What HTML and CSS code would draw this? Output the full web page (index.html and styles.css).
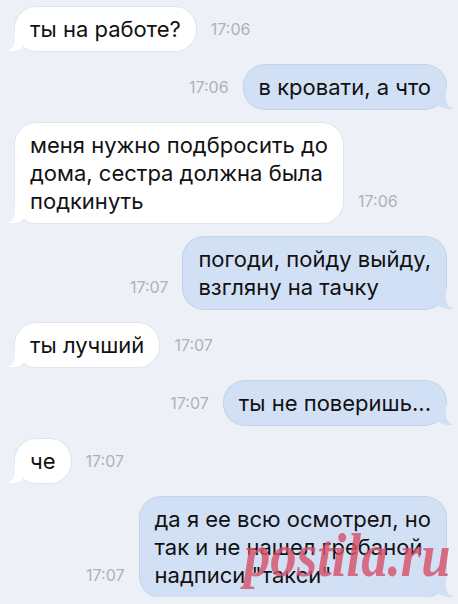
FILE: index.html
```html
<!DOCTYPE html>
<html lang="ru">
<head>
    <meta charset="UTF-8">
    <meta name="viewport" content="width=device-width, initial-scale=1.0">
    <title>Переписка</title>
    <link rel="stylesheet" href="styles.css">
</head>
<body>
    <div class="chat">
        <div class="row in">
            <div class="bubble">ты на работе?</div>
            <span class="time">17:06</span>
        </div>
        <div class="row out">
            <span class="time">17:06</span>
            <div class="bubble">в кровати, а что</div>
        </div>
        <div class="row in">
            <div class="bubble">меня нужно подбросить до<br>дома, сестра должна была<br>подкинуть</div>
            <span class="time">17:06</span>
        </div>
        <div class="row out">
            <span class="time">17:07</span>
            <div class="bubble">погоди, пойду выйду,<br>взгляну на тачку</div>
        </div>
        <div class="row in">
            <div class="bubble">ты лучший</div>
            <span class="time">17:07</span>
        </div>
        <div class="row out">
            <span class="time">17:07</span>
            <div class="bubble">ты не поверишь...</div>
        </div>
        <div class="row in">
            <div class="bubble">че</div>
            <span class="time">17:07</span>
        </div>
        <div class="row out">
            <span class="time">17:07</span>
            <div class="bubble">да я ее всю осмотрел, но<br>так и не нашел гребаной<br>надписи "такси"</div>
        </div>
    </div>

    <!-- watermark -->
    <div class="watermark">postila.ru</div>
</body>
</html>
```

FILE: styles.css
```css
/* Page */
body {
    margin: 0;
    background-color: #edf1f7;
    font-family: Inter, "Noto Sans", sans-serif;
    color: #111;
    overflow: hidden;
}

/* Message list */
.chat {
    display: flex;
    flex-direction: column;
    gap: 14px;
    padding: 7px 12px 0 15px;
}

.row {
    display: flex;
    align-items: flex-end;
    gap: 15px;
}

.row.out {
    justify-content: flex-end;
}

/* Bubbles */
.bubble {
    position: relative;
    z-index: 1;
    padding: 8px 15px;
    font-size: 22px;
    line-height: 28px;
    border-radius: 21px;
    white-space: nowrap;
}

.in .bubble {
    background-color: #fff;
    box-shadow: 0 0 0 1px #dfe5ec;
}

.out .bubble {
    background-color: #d1e0f4;
    box-shadow: 0 0 0 1px #c3d3e8;
}

/* Tails */
.bubble::before,
.bubble::after {
    content: '';
    position: absolute;
    bottom: 0;
    height: 20px;
}

.in .bubble::before {
    left: -7px;
    width: 20px;
    background-color: #fff;
    border-bottom-right-radius: 16px 14px;
    z-index: -1;
}

.in .bubble::after {
    left: -26px;
    width: 26px;
    background-color: #edf1f7;
    border-bottom-right-radius: 10px;
}

.out .bubble::before {
    right: -7px;
    width: 20px;
    background-color: #d1e0f4;
    border-bottom-left-radius: 16px 14px;
    z-index: -1;
}

.out .bubble::after {
    right: -26px;
    width: 26px;
    background-color: #edf1f7;
    border-bottom-left-radius: 10px;
}

/* Time stamps */
.time {
    font-size: 16px;
    color: #abb2bc;
    margin-bottom: 12px;
}

/* postila.ru stamp over the last message */
.watermark {
    position: absolute;
    z-index: 10;
    left: 244px;
    top: 524px;
    font-family: "Liberation Serif", serif;
    font-weight: bold;
    font-style: italic;
    font-size: 62px;
    line-height: 1;
    color: #d8536b;
    opacity: 0.82;
    transform: scaleX(0.85);
    transform-origin: left top;
}
```
